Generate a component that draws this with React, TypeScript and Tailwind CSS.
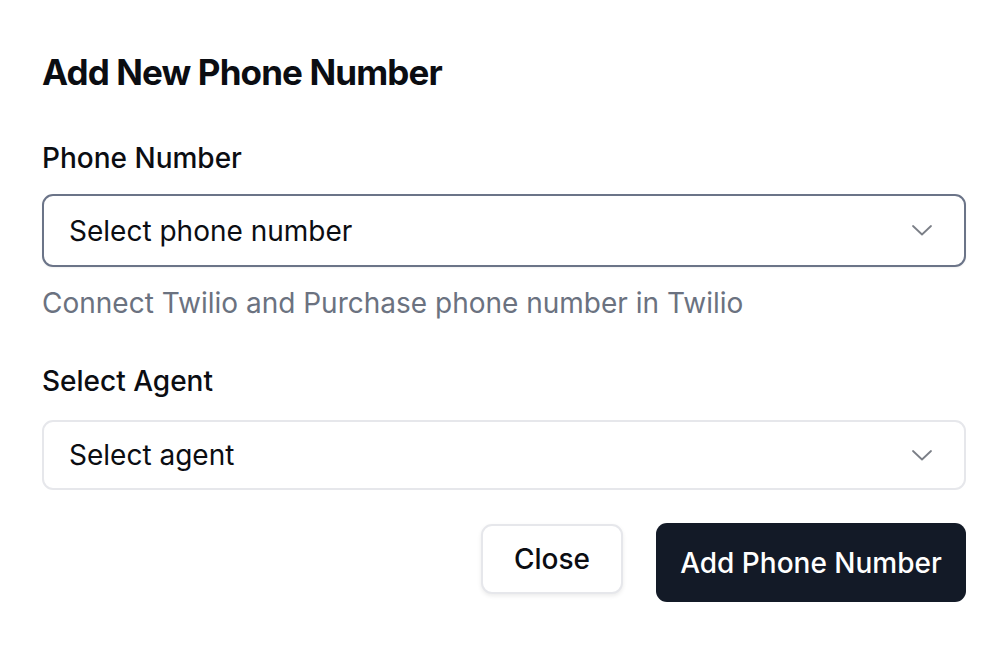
import { ReactNode } from "react";

function Chevron() {
  return (
    <svg width="20" height="11" viewBox="0 0 20 11" fill="none" className="shrink-0">
      <polyline
        points="1,1 10,9.5 19,1"
        stroke="#7b7f87"
        strokeWidth="1.8"
        strokeLinecap="round"
        strokeLinejoin="round"
      />
    </svg>
  );
}

function Select({ placeholder, focused }: { placeholder: string; focused?: boolean }) {
  return (
    <div
      className={`flex items-center justify-between rounded-[11px] bg-white pl-[25px] pr-[32px] ${
        focused
          ? "h-[73px] border-2 border-[#6b7488] shadow-[0_1px_2px_rgba(0,0,0,0.06)]"
          : "h-[70px] border-2 border-[#e6e7eb]"
      }`}
    >
      <span className="text-[28px] leading-[32px] text-[#0b0d12]">{placeholder}</span>
      <Chevron />
    </div>
  );
}

function Label({ children }: { children: ReactNode }) {
  return <p className="text-[28px] font-medium leading-[32px] text-[#0b0d12]">{children}</p>;
}

export default function App() {
  return (
    <div
      className="min-h-[646px] w-[1008px] bg-white px-[42px] pt-[52px]"
      style={{ fontFamily: "Inter, 'Noto Sans', sans-serif" }}
    >
      <h2 className="text-[35px] font-bold leading-[40px] tracking-[-0.025em] text-[#0b0d12]">
        Add New Phone Number
      </h2>

      <div className="mt-[50px]">
        <Label>Phone Number</Label>
      </div>
      <div className="mt-[20px]">
        <Select placeholder="Select phone number" focused />
      </div>
      <p className="mt-[20px] text-[28px] leading-[32px] text-[#6b7280]">
        Connect Twilio and Purchase phone number in Twilio
      </p>

      <div className="mt-[46px]">
        <Label>Select Agent</Label>
      </div>
      <div className="mt-[23px]">
        <Select placeholder="Select agent" />
      </div>

      <div className="mt-[33px] flex items-start justify-end gap-[33px]">
        <button className="mt-px flex h-[70px] w-[142px] items-center justify-center rounded-[11px] border-2 border-[#e6e7eb] bg-white text-[28px] font-medium text-[#0b0d12] shadow-[0_2px_4px_rgba(0,0,0,0.08)]">
          Close
        </button>
        <button className="flex h-[79px] w-[310px] items-center justify-center rounded-[11px] bg-[#131a27] text-[28px] font-medium text-white">
          Add Phone Number
        </button>
      </div>
    </div>
  );
}
